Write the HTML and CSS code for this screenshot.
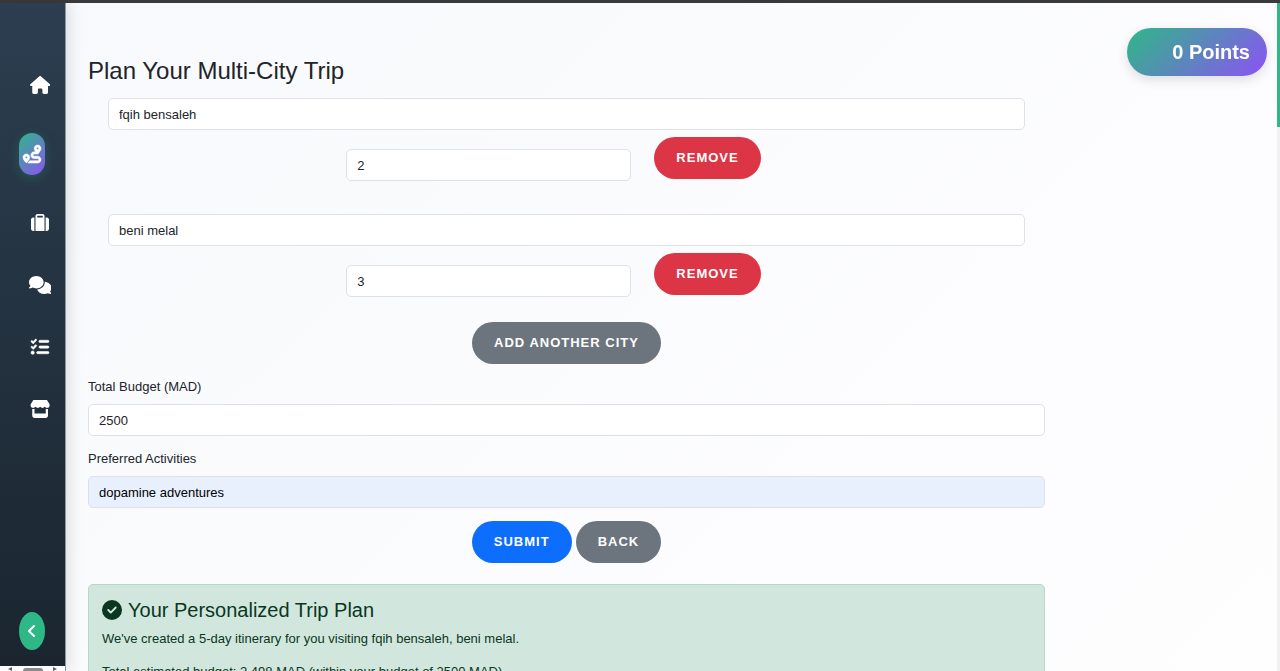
FILE: index.html
```html
<!DOCTYPE html>
<html lang="en">

<head>
    <meta charset="UTF-8">
    <meta name="viewport" content="width=device-width, initial-scale=1.0">
    <title>Trip Planner</title>

    <link rel="stylesheet" href="styles.css">
</head>

<body>
    <aside class="sidebar">
        <nav class="sidebar-nav">
            <a href="#" class="nav-link" aria-label="Home">
                <svg class="icon" viewBox="0 0 576 512"><path d="M575.8 255.5c0 18-15 32.1-32 32.1h-32l.7 160.2c0 2.7-.2 5.4-.5 8.1V472c0 22.1-17.9 40-40 40H456c-1.1 0-2.2 0-3.3-.1c-1.4 .1-2.8 .1-4.2 .1H416 392c-22.1 0-40-17.9-40-40V448 384c0-17.7-14.3-32-32-32H256c-17.7 0-32 14.3-32 32v64 24c0 22.1-17.9 40-40 40H160 128.1c-1.5 0-3-.1-4.5-.2c-1.2 .1-2.4 .2-3.6 .2H104c-22.1 0-40-17.9-40-40V360c0-.9 0-1.9 .1-2.8V287.6H32c-18 0-32-14-32-32.1c0-9 3-17 10-24L266.4 8c7-7 15-8 22-8s15 2 21 7L564.8 231.5c8 7 12 15 11 24z"/></svg>
            </a>
            <a href="#" class="nav-link active" aria-label="Trip">
                <svg class="icon" viewBox="0 0 512 512"><path d="M512 96c0 50.2-59.1 125.1-84.6 155c-3.8 4.4-9.4 6.1-14.5 5H320c-17.7 0-32 14.3-32 32s14.3 32 32 32h96c53 0 96 43 96 96s-43 96-96 96H139.6c8.7-9.9 19.3-22.6 30-36.8c6.3-8.4 12.8-17.6 19-27.2H416c17.7 0 32-14.3 32-32s-14.3-32-32-32H320c-53 0-96-43-96-96s43-96 96-96h39.8c-21-31.5-39.8-67.7-39.8-96c0-53 43-96 96-96s96 43 96 96zM117.1 489.1c-3.8 4.3-7.2 8.1-10.1 11.3l-1.8 2-.2-.2c-6 4.6-14.6 4-20-1.8C59.8 473 0 402.5 0 352c0-53 43-96 96-96s96 43 96 96c0 30-21.1 67-43.5 97.9c-10.7 14.7-21.7 28-30.8 38.5l-.6 .7zM128 352a32 32 0 1 0 -64 0 32 32 0 1 0 64 0zM416 128a32 32 0 1 0 0-64 32 32 0 1 0 0 64z"/></svg>
            </a>
            <a href="#" class="nav-link" aria-label="Luggage">
                <svg class="icon" viewBox="0 0 512 512"><path d="M176 56V96H336V56c0-4.4-3.6-8-8-8H184c-4.4 0-8 3.6-8 8zM128 96V56c0-30.9 25.1-56 56-56H328c30.9 0 56 25.1 56 56V96v32V480H128V128 96zM64 96H96V480H64c-35.3 0-64-28.7-64-64V160c0-35.3 28.7-64 64-64zM448 480H416V96h32c35.3 0 64 28.7 64 64V416c0 35.3-28.7 64-64 64z"/></svg>
            </a>
            <a href="#" class="nav-link" aria-label="Chat">
                <svg class="icon" viewBox="0 0 640 512"><path d="M208 352c114.9 0 208-78.8 208-176S322.9 0 208 0S0 78.8 0 176c0 38.6 14.7 74.3 39.6 103.4c-3.5 9.4-8.7 17.7-14.2 24.7c-4.8 6.2-9.7 11-13.3 14.3c-1.8 1.6-3.3 2.9-4.3 3.7c-.5 .4-.9 .7-1.1 .8l-.2 .2C1 327.2-1.4 334.4 .8 340.9S9.1 352 16 352c21.8 0 43.8-5.6 62.1-12.5c9.2-3.5 17.8-7.4 25.2-11.4C134.1 343.3 169.8 352 208 352zM448 176c0 112.3-99.1 196.9-216.5 207C255.8 457.4 336.4 512 432 512c38.2 0 73.9-8.7 104.7-23.9c7.5 4 16 7.9 25.2 11.4c18.3 6.9 40.3 12.5 62.1 12.5c6.9 0 13.1-4.5 15.2-11.1c2.1-6.6-.2-13.8-5.8-17.9l-.2-.2c-.2-.2-.6-.4-1.1-.8c-1-.8-2.5-2-4.3-3.7c-3.6-3.3-8.5-8.1-13.3-14.3c-5.5-7-10.7-15.4-14.2-24.7c24.9-29 39.6-64.7 39.6-103.4c0-92.8-84.9-168.9-192.6-175.5c.4 5.1 .6 10.3 .6 15.5z"/></svg>
            </a>
            <a href="#" class="nav-link" aria-label="Checklist">
                <svg class="icon icon-bold" viewBox="0 0 512 512"><path d="M152.1 38.2c9.9 8.9 10.7 24 1.8 33.9l-72 80c-4.4 4.9-10.6 7.8-17.2 7.9s-12.9-2.4-17.6-7L7 113C-2.3 103.6-2.3 88.4 7 79s24.6-9.4 33.9 0l22.1 22.1 55.1-61.2c8.9-9.9 24-10.7 33.9-1.8zM152.1 198.2c9.9 8.9 10.7 24 1.8 33.9l-72 80c-4.4 4.9-10.6 7.8-17.2 7.9s-12.9-2.4-17.6-7L7 273C-2.3 263.6-2.3 248.4 7 239s24.6-9.4 33.9 0l22.1 22.1 55.1-61.2c8.9-9.9 24-10.7 33.9-1.8zM224 96c0-17.7 14.3-32 32-32H480c17.7 0 32 14.3 32 32s-14.3 32-32 32H256c-17.7 0-32-14.3-32-32zM224 256c0-17.7 14.3-32 32-32H480c17.7 0 32 14.3 32 32s-14.3 32-32 32H256c-17.7 0-32-14.3-32-32zM160 416c0-17.7 14.3-32 32-32H480c17.7 0 32 14.3 32 32s-14.3 32-32 32H192c-17.7 0-32-14.3-32-32zM48 368a48 48 0 1 0 0 96 48 48 0 1 0 0-96z"/></svg>
            </a>
            <a href="#" class="nav-link" aria-label="Store">
                <svg class="icon" viewBox="0 0 576 512"><path d="M547.6 103.8L490.3 13.1C485.2 5 476.1 0 466.4 0H109.6C99.9 0 90.8 5 85.7 13.1L28.3 103.8c-29.6 46.8-3.4 111.9 51.9 119.4c4 .5 8.1 .8 12.1 .8c26.1 0 49.3-11.4 65.2-29c15.9 17.6 39.1 29 65.2 29c26.1 0 49.3-11.4 65.2-29c15.9 17.6 39.1 29 65.2 29c26.2 0 49.3-11.4 65.2-29c16 17.6 39.1 29 65.2 29c4.1 0 8.1-.3 12.1-.8c55.5-7.4 81.8-72.5 52.1-119.4zM499.7 254.9l-.1 0c-5.3 .7-10.7 1.1-16.2 1.1c-12.4 0-24.3-1.9-35.4-5.3V384H128V250.6c-11.2 3.5-23.2 5.4-35.6 5.4c-5.5 0-11-.4-16.3-1.1l-.1 0c-4.1-.6-8.1-1.3-12-2.3V384v64c0 35.3 28.7 64 64 64H448c35.3 0 64-28.7 64-64V384 252.6c-4 1-8 1.8-12.3 2.3z"/></svg>
            </a>
        </nav>
        <button type="button" class="sidebar-toggle" aria-label="Collapse sidebar">
            <svg viewBox="0 0 10 14"><path d="M7 2L2 7l5 5"/></svg>
        </button>
        <div class="sidebar-scroll">
            <span class="arrow arrow-left"></span>
            <span class="thumb"></span>
            <span class="arrow arrow-right"></span>
        </div>
    </aside>

    <div class="points">0 Points</div>

    <main class="content">
        <h2>Plan Your Multi-City Trip</h2>
        <form>
            <div class="city">
                <input type="text" class="form-control" value="fqih bensaleh" aria-label="City">
                <div class="city-row">
                    <input type="text" inputmode="numeric" class="form-control days" value="2" aria-label="Days">
                    <button type="button" class="btn btn-danger">Remove</button>
                </div>
            </div>
            <div class="city">
                <input type="text" class="form-control" value="beni melal" aria-label="City">
                <div class="city-row">
                    <input type="text" inputmode="numeric" class="form-control days" value="3" aria-label="Days">
                    <button type="button" class="btn btn-danger">Remove</button>
                </div>
            </div>
            <div class="actions">
                <button type="button" class="btn btn-secondary">Add Another City</button>
            </div>
            <div class="field">
                <label for="budget">Total Budget (MAD)</label>
                <input type="text" inputmode="numeric" class="form-control" id="budget" value="2500">
            </div>
            <div class="field">
                <label for="activities">Preferred Activities</label>
                <input type="text" class="form-control autofilled" id="activities" value="dopamine adventures">
            </div>
            <div class="actions">
                <button type="submit" class="btn btn-primary">Submit</button>
                <button type="button" class="btn btn-secondary">Back</button>
            </div>
        </form>

        <section class="alert">
            <h4>
                <svg class="check" viewBox="0 0 512 512"><path d="M256 512A256 256 0 1 0 256 0a256 256 0 1 0 0 512zM369 209L241 337c-9.4 9.4-24.6 9.4-33.9 0l-64-64c-9.4-9.4-9.4-24.6 0-33.9s24.6-9.4 33.9 0l47 47L335 175c9.4-9.4 24.6-9.4 33.9 0s9.4 24.6 0 33.9z"/></svg>
                Your Personalized Trip Plan
            </h4>
            <p>We've created a 5-day itinerary for you visiting fqih bensaleh, beni melal.</p>
            <p>Total estimated budget: 2,498 MAD (within your budget of 2500 MAD).</p>
        </section>
    </main>

    <div class="page-scroll"></div>
</body>

</html>
```

FILE: styles.css
```css
* {
    box-sizing: border-box;
}

html {
    scrollbar-width: none;
}

body {
    margin: 0;
    min-height: 100vh;
    border-top: 3px solid #3a3a3c;
    font-family: "Liberation Sans", Arial, sans-serif;
    font-size: 13px;
    line-height: 20px;
    color: #212529;
    background: linear-gradient(135deg, #f8f9fc, #fefeff);
}

/* Sidebar */
.sidebar {
    position: fixed;
    top: 3px;
    bottom: 0;
    left: 0;
    width: 66px;
    display: flex;
    flex-direction: column;
    border-right: 1px solid #8d979f;
    background: linear-gradient(180deg, #2c3e50, #1a252f);
    box-shadow: 3px 0 14px rgba(0, 0, 0, 0.12);
}

.sidebar-nav {
    flex: 1;
    display: flex;
    flex-direction: column;
    gap: 20px;
    padding: 61px 0 0 19px;
}

.nav-link {
    display: flex;
    align-items: center;
    justify-content: center;
    width: 42px;
    height: 42px;
    color: #fff;
}

.nav-link.active {
    width: 26px;
    margin: 7px 0;
    border-radius: 13px;
    background: linear-gradient(135deg, #2eb886, #8c52f5);
    box-shadow: 0 3px 12px rgba(46, 184, 134, 0.25);
}

.icon {
    height: 18px;
    fill: currentColor;
}

.active .icon,
.icon-bold {
    overflow: visible;
    stroke: currentColor;
    stroke-width: 16;
}

.sidebar-toggle {
    width: 26px;
    height: 38px;
    margin: 0 0 16px 19px;
    padding: 0;
    border: none;
    border-radius: 50%;
    background: #2eb886;
    cursor: pointer;
}

.sidebar-toggle svg {
    display: block;
    height: 14px;
    margin: 0 auto;
    fill: none;
    stroke: #fff;
    stroke-width: 2;
    stroke-linecap: round;
    stroke-linejoin: round;
}

.sidebar-scroll {
    display: flex;
    align-items: flex-end;
    justify-content: space-between;
    height: 5px;
    padding: 0 8px;
    overflow: hidden;
    background: #fcfcfc;
}

.thumb {
    width: 20px;
    height: 3px;
    border-radius: 3px 3px 0 0;
    background: #8b8b8b;
}

.arrow {
    border-top: 2px solid transparent;
    border-bottom: 2px solid transparent;
}

.arrow-left {
    border-right: 4px solid #606060;
}

.arrow-right {
    border-left: 4px solid #606060;
}

/* Points badge */
.points {
    position: fixed;
    top: 28px;
    right: 13px;
    padding: 12px 17px 12px 45px;
    border-radius: 24px;
    font-size: 20px;
    font-weight: bold;
    line-height: 24px;
    color: #fff;
    background: linear-gradient(135deg, #2eb886, #8c52f5);
    box-shadow: 0 4px 12px rgba(0, 0, 0, 0.12);
}

/* Form */
.content {
    margin: 0 235px 0 88px;
    padding: 53px 0 20px;
}

h2,
h4 {
    margin: 0;
    font-weight: normal;
}

h2 {
    margin-bottom: 12px;
    font-size: 24px;
    line-height: 30px;
}

.form-control {
    display: block;
    width: 100%;
    height: 32px;
    padding: 0 10px;
    border: 1px solid #dee2e6;
    border-radius: 5px;
    font: inherit;
    color: #212529;
    background: #fff;
}

.form-control.autofilled {
    color: #000;
    background: #e8f0fe;
}

.city {
    padding: 0 20px;
    margin-bottom: 33px;
}

.city-row {
    display: flex;
    justify-content: center;
    align-items: flex-start;
    gap: 23px;
    margin-top: 7px;
    padding-right: 26px;
}

.days {
    width: 285px;
    margin-top: 12px;
}

.actions {
    display: flex;
    justify-content: center;
    gap: 4px;
}

.city + .actions {
    margin-top: -8px;
}

.btn {
    height: 42px;
    padding: 0 22px;
    border: none;
    border-radius: 21px;
    font: inherit;
    font-weight: bold;
    letter-spacing: 1px;
    text-transform: uppercase;
    color: #fff;
    cursor: pointer;
}

.btn-danger {
    background: #dc3545;
}

.btn-secondary {
    background: #6c757d;
}

.btn-primary {
    background: #0d6efd;
}

.field {
    margin: 13px 0;
}

.field label {
    display: block;
    margin-bottom: 7px;
}

/* Result */
.alert {
    margin-top: 21px;
    padding: 13px;
    border: 1px solid #b3d9c8;
    border-radius: 5px;
    color: #0a3622;
    background: #d1e7dd;
}

.alert h4 {
    display: flex;
    align-items: center;
    gap: 6px;
    margin-bottom: 7px;
    font-size: 20px;
    line-height: 24px;
}

.check {
    width: 20px;
    height: 20px;
    fill: currentColor;
}

.alert p {
    margin: 0 0 13px;
}

/* Page scroll indicator */
.page-scroll {
    position: fixed;
    top: 3px;
    right: 0;
    bottom: 0;
    width: 3px;
    background: linear-gradient(#2eb886, #2eb886) top / 100% 124px no-repeat #f1f1f1;
}
```
